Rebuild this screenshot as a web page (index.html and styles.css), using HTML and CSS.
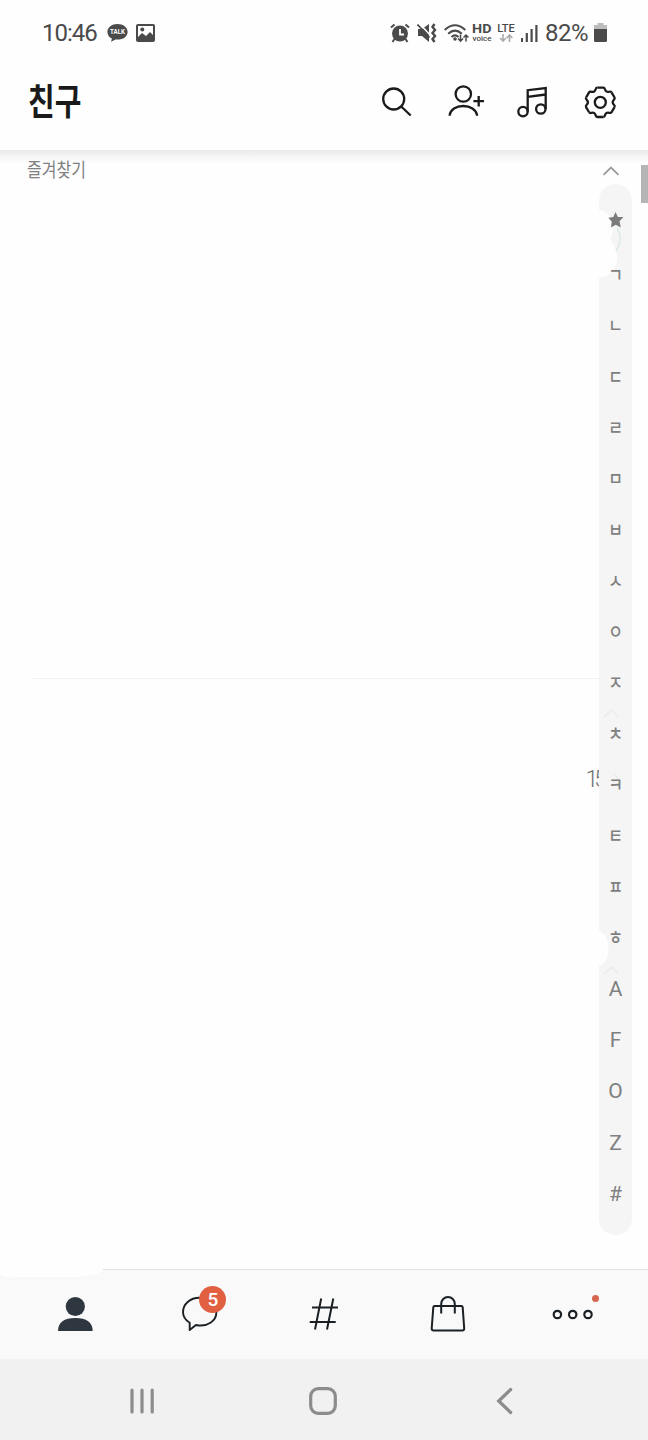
FILE: index.html
```html
<!DOCTYPE html>
<html lang="ko">
<head>
    <meta charset="utf-8">
    <title>친구</title>
    <link rel="stylesheet" href="styles.css">
</head>
<body>
    <div id="status-bar">
        <span class="clock">10:46</span>
        <svg class="talk" width="21" height="20" viewBox="0 0 21 20">
            <path d="M10.500 1C4.800 1 .4 4.300.4 8.900c0 2.900 1.800 5.300 4.500 6.700l-.8 3.200 4.400-2.300c7 .8 12.100-2.900 12.100-7.600C20.600 4.300 16.200 1 10.500 1z" fill="#4a4a4a"/>
            <text x="10.500" y="11.300" text-anchor="middle" textLength="15" lengthAdjust="spacingAndGlyphs">TALK</text>
        </svg>
        <svg width="19" height="18" viewBox="0 0 19 18">
            <path d="M2 0h15a2 2 0 0 1 2 2v14a2 2 0 0 1-2 2H2a2 2 0 0 1-2-2V2a2 2 0 0 1 2-2z" fill="#4a4a4a"/>
            <path d="M2 2h15v9l-3-3-4 4-4-3-4 4z" fill="#fff"/>
            <circle cx="6.300" cy="5.500" r="2" fill="#4a4a4a"/>
        </svg>
        <div class="status-right">
            <svg width="20" height="20" viewBox="0 0 20 20" fill="none" stroke="#4a4a4a">
                <circle cx="10" cy="10.500" r="8" fill="#4a4a4a" stroke="none"/>
                <path d="M1 4.500L4.500 1.500M19 4.500L15.500 1.500M4.500 16L2.500 19M15.500 16l2 3" stroke-width="2"/>
                <path d="M10 6v5.500h4" stroke="#fff" stroke-width="1.800"/>
            </svg>
            <svg class="mute" width="20" height="20" viewBox="0 0 20 20" fill="none" stroke="#4a4a4a">
                <path d="M1 6h4l7-5v18l-7-6H1z" fill="#4a4a4a" stroke="none"/>
                <path d="M2 0l12 13" stroke="#fff" stroke-width="1.500"/>
                <path d="M.5 1.500l12 13" stroke-width="1.800"/>
                <path d="M17.500 1l-2 3 2.500 3-2.500 3 2.500 3-2.500 3 2 3" stroke-width="2.400"/>
            </svg>
            <svg class="wifi" width="25" height="20" viewBox="0 0 25 20" fill="none" stroke="#4a4a4a" stroke-width="2">
                <path d="M.7 7Q11 -2.500 21.300 7M4.200 10.700Q11 4.500 17.800 10.700M7.500 14Q11 10.800 14.500 14"/>
                <circle cx="11" cy="16" r="1.800" fill="#4a4a4a" stroke="none"/>
                <path d="M16.500 11.500v6.500M14 15.500l2.500 2.700 2.500-2.700M22 18.500V12M19.500 14.500L22 12l2.500 2.500" stroke-width="1.500"/>
            </svg>
            <div class="hd"><b>HD</b><small>voice</small></div>
            <div class="lte">
                <b>LTE</b>
                <svg width="14" height="8" viewBox="0 0 14 8" fill="none" stroke="#aaa" stroke-width="1.600">
                    <path d="M4 0v7M1 4l3 3 3-3M10.500 8V1M7.700 4l2.800-3 2.800 3"/>
                </svg>
            </div>
            <svg class="signal" width="17" height="18" viewBox="0 0 17 18" fill="#4a4a4a">
                <path d="M0 14h2v4H0zM4.700 9h2.200v9H4.700zM9.500 5h2.200v13H9.500zM14.300 1h2.200v17h-2.200z"/>
            </svg>
            <span class="percent">82%</span>
            <svg class="battery" width="13" height="19" viewBox="0 0 13 19">
                <path d="M3.500 0h6v2H13v4H0V2h3.500z" fill="#bcbcbc"/>
                <path d="M0 6h13v11.500q0 1.500-1.500 1.500h-10Q0 19 0 17.500z" fill="#4a4a4a"/>
            </svg>
        </div>
    </div>

    <header>
        <h1>친구</h1>
        <div class="actions">
            <svg width="35" height="36" viewBox="0 0 35 36">
                <circle cx="13.700" cy="15" r="10.500"/>
                <path d="M21.200 22.500l9.500 9"/>
            </svg>
            <svg width="40" height="36" viewBox="0 0 40 36">
                <circle cx="17.300" cy="10" r="7.700"/>
                <path d="M3.700 31.700v-.8C4.500 25.500 10 22 17.200 22S30 25.500 31 30.900v.8M27.400 17.200h10.600M32.700 12v10.500"/>
            </svg>
            <svg width="32" height="36" viewBox="0 0 32 36">
                <circle cx="6" cy="27.600" r="4.700"/>
                <circle cx="23.800" cy="25" r="4.700"/>
                <path d="M10.700 27.500V6.200l18-2.200v21M10.700 12.800l18-2.300"/>
            </svg>
            <svg width="40" height="36" viewBox="0 0 40 36">
                <defs>
                    <path id="lobe" d="M-3 -14.700H3C5.200 -14.700 4 -11.900 6.200 -10.700C8.400 -9.500 10.130 -11.850 11.230 -9.950"/>
                </defs>
                <g transform="translate(20.300 18.300)">
                    <use href="#lobe"/>
                    <use href="#lobe" transform="rotate(60)"/>
                    <use href="#lobe" transform="rotate(120)"/>
                    <use href="#lobe" transform="rotate(180)"/>
                    <use href="#lobe" transform="rotate(240)"/>
                    <use href="#lobe" transform="rotate(300)"/>
                    <circle r="5.500"/>
                </g>
            </svg>
        </div>
    </header>

    <main>
        <div class="list">
            <h2>즐겨찾기</h2>
            <hr>
            <p class="count">15</p>
        </div>
        <div class="side">
            <svg class="fold" width="18" height="10" viewBox="0 0 18 10"><path d="M1.500 8.800L9 1.500l7.500 7.300"/></svg>
            <div class="index">
                <div class="star">
                    <svg width="16" height="16" viewBox="0 0 16 16"><path d="M7.500 0l2.400 4.900 5.600.2-4 4.100 1.300 6.200-5-2.600L3 15.600l.8-5.900L.4 5.800l5-.9z"/></svg>
                </div>
                <div>ㄱ</div>
                <div>ㄴ</div>
                <div>ㄷ</div>
                <div>ㄹ</div>
                <div>ㅁ</div>
                <div>ㅂ</div>
                <div>ㅅ</div>
                <div>ㅇ</div>
                <div>ㅈ</div>
                <div>ㅊ</div>
                <div>ㅋ</div>
                <div>ㅌ</div>
                <div>ㅍ</div>
                <div>ㅎ</div>
                <div class="latin">A</div>
                <div class="latin">F</div>
                <div class="latin">O</div>
                <div class="latin">Z</div>
                <div class="latin">#</div>
                <!-- what shows through behind the letters -->
                <svg class="under" width="33" height="1051" viewBox="0 0 33 1051" fill="none">
                    <path d="M0 26C8 26 14 34 14 43q0 7-3 13C15 60 18 67 18 74 18 85 10 93 0 94z" fill="#fefefe"/>
                    <path d="M0 747C6 749 9.500 757 9.500 765S6 780 0 782z" fill="#fefefe"/>
                    <path d="M18 44q7 11-1 23" stroke="#dcebe4" stroke-width="1.500"/>
                    <path d="M5 533l7.500-7 7.500 7M5 790l7.500-7 7.500 7M14 589l5 5-5 5" stroke="#ebebeb" stroke-width="1.500"/>
                </svg>
            </div>
            <div class="scrollbar"></div>
        </div>
    </main>

    <nav id="tabs">
        <div class="tab">
            <svg width="40" height="40" viewBox="0 0 40 40" fill="#2e3640">
                <circle cx="20.300" cy="12.500" r="9.600"/>
                <path d="M3 37C3.200 28 9 24 20.300 24S37.500 28 37.700 37z"/>
            </svg>
        </div>
        <div class="tab">
            <svg width="40" height="40" viewBox="0 0 40 40" fill="none" stroke="#1b2025" stroke-width="1.900" stroke-linejoin="round">
                <path d="M19.500 3.800C10 3.800 3 10.200 3 18c0 4.700 2.200 8 6.700 10.700V36l6.200-5c11.600 2.500 20.500-4 20.500-13 0-8-7.300-14.200-16.900-14.200z"/>
            </svg>
            <span class="badge">5</span>
        </div>
        <div class="tab">
            <svg width="40" height="40" viewBox="0 0 40 40" fill="none" stroke="#1b2025" stroke-width="2">
                <path d="M17.200 4.500L11 35.500M29.300 4.500L23 35.500M8 13.500h26M5.700 28h26"/>
            </svg>
        </div>
        <div class="tab">
            <svg width="40" height="40" viewBox="0 0 40 40" fill="none" stroke="#1b2025" stroke-width="2">
                <path d="M6.700 12h26.600q1.300 0 1.400 1.300l1.500 21.200q0 2-2 2H5.700q-2 0-2-2l1.600-21.200Q5.400 12 6.700 12z"/>
                <path d="M13.200 19.500V10a6.800 7 0 0 1 13.600 0v9.500"/>
            </svg>
        </div>
        <div class="tab">
            <svg width="46" height="40" viewBox="0 0 46 40" fill="none" stroke="#1b2025" stroke-width="2.200">
                <circle cx="7.400" cy="20.500" r="3.700"/>
                <circle cx="22.700" cy="20.500" r="3.700"/>
                <circle cx="38" cy="20.500" r="3.700"/>
            </svg>
            <span class="dot"></span>
        </div>
    </nav>

    <footer>
        <svg width="26" height="28" viewBox="0 0 26 28"><path d="M3 3v22M13 3v22M23.200 3v22"/></svg>
        <svg width="28" height="28" viewBox="0 0 28 28"><rect x="1.700" y="1.700" width="24.600" height="24.600" rx="7.500"/></svg>
        <svg width="28" height="28" viewBox="0 0 28 28"><path d="M19.700 2.500L7.700 14l12 11.500"/></svg>
    </footer>
</body>
</html>
```

FILE: styles.css
```css
* {
    box-sizing: border-box;
}

body {
    width: 648px;
    height: 1440px;
    margin: 0;
    background: #fefefe;
    color: #4a4a4a;
    font-family: Roboto, "Noto Sans CJK KR", sans-serif;
    display: flex;
    flex-direction: column;
    overflow: hidden;
}

svg {
    display: block;
    flex: none;
}

/* status bar */
#status-bar {
    height: 65px;
    padding: 0 41px 0 42px;
    display: flex;
    align-items: center;
}

.clock {
    width: 65px;
    font-size: 24px;
    letter-spacing: -1px;
    line-height: 28px;
}

.talk {
    margin-right: 8px;
}

.talk text {
    font-size: 6.5px;
    font-weight: bold;
    fill: #fff;
}

.status-right {
    margin-left: auto;
    display: flex;
    align-items: center;
}

.mute {
    margin-left: 7px;
}

.wifi {
    margin-left: 7px;
}

.hd,
.lte {
    width: 20px;
    margin-left: 3px;
    height: 18px;
    display: flex;
    flex-direction: column;
    align-items: center;
}

.hd {
    height: 20px;
}

.hd b {
    font-size: 13px;
    line-height: 12px;
    transform: scaleX(1.1);
}

.hd small {
    font-size: 8px;
    line-height: 8px;
    font-weight: 500;
}

.lte {
    margin-left: 4px;
}

.lte b {
    font-size: 11px;
    line-height: 10px;
    font-weight: 500;
}

.signal {
    margin-left: 5px;
}

.percent {
    margin-left: 7px;
    width: 44px;
    font-size: 24px;
    letter-spacing: -0.5px;
    line-height: 28px;
    padding-top: 1px;
}

.battery {
    margin-left: 5px;
}

/* header */
header {
    height: 85px;
    padding: 0 28px 11px;
    display: flex;
    align-items: center;
    justify-content: space-between;
}

h1 {
    margin: 0;
    font-size: 29px;
    line-height: 36px;
    color: #1a1a1a;
    transform: scaleY(1.25);
}

.actions {
    display: flex;
    gap: 31px;
}

.actions svg {
    fill: none;
    stroke: #1b1b1b;
    stroke-width: 2.3;
}

/* friend list */
main {
    height: 1119px;
    display: flex;
    background: linear-gradient(#e9e9e9, #f5f5f5 6px, #fefefe 14px);
}

.list {
    width: 599px;
}

h2 {
    margin: 9px 0 0 27px;
    font-size: 16px;
    font-weight: 400;
    line-height: 24px;
    color: #808080;
    transform: scaleY(1.2);
}

hr {
    margin: 495px 0 0 33px;
    border: none;
    border-top: 1px solid #f1f1f1;
}

.count {
    margin: 87px -4px 0 0;
    text-align: right;
    font-size: 23px;
    font-weight: 300;
    letter-spacing: -4px;
    line-height: 28px;
    color: #707070;
}

.side {
    width: 49px;
    position: relative;
}

.fold {
    margin: 16px 0 8px 3px;
}

.fold path {
    fill: none;
    stroke: #9a9a9a;
    stroke-width: 1.8;
}

.index {
    width: 33px;
    height: 1051px;
    padding-top: 10px;
    border-radius: 16.5px;
    background: #f5f5f5;
    position: relative;
}

.index div {
    height: 51px;
    line-height: 51px;
    text-align: center;
    font-size: 16px;
    font-weight: 500;
    color: #808080;
    position: relative;
    z-index: 1;
    transform: scaleY(1.2);
}

.index .star {
    height: 56px;
    padding: 18px 0 0 9px;
    transform: none;
}

.star svg {
    fill: #7b7b7b;
}

.index .latin {
    height: 51.2px;
    font-size: 21px;
    font-weight: 400;
    transform: none;
}

.under {
    position: absolute;
    top: 0;
    left: 0;
}

.scrollbar {
    position: absolute;
    top: 15px;
    right: 0;
    width: 7px;
    height: 38px;
    background: #b5b5b5;
}

/* bottom tabs */
#tabs {
    height: 90px;
    padding: 0 13px 1px;
    border-top: 1px solid #e2e2e2;
    background: #f9f9f9;
    display: flex;
    position: relative;
}

#tabs::before {
    content: "";
    position: absolute;
    left: -4px;
    top: -1px;
    width: 107px;
    height: 8px;
    background: #fefefe;
    border-radius: 0 0 30px 15px / 0 0 8px 8px;
}

.tab {
    flex: 1;
    display: flex;
    align-items: center;
    justify-content: center;
    position: relative;
}

.badge {
    position: absolute;
    top: 16px;
    left: 62px;
    width: 27px;
    height: 27px;
    border-radius: 50%;
    background: #e16042;
    color: #fff;
    font-size: 19px;
    font-weight: 500;
    line-height: 28px;
    text-align: center;
}

.dot {
    position: absolute;
    top: 25px;
    right: 36px;
    width: 7px;
    height: 7px;
    border-radius: 50%;
    background: #d5664d;
}

/* android navigation */
footer {
    height: 81px;
    padding: 3px 52px 0 51px;
    background: #f1f1f1;
    display: grid;
    grid-template-columns: repeat(3, 1fr);
    align-items: center;
    justify-items: center;
}

footer svg {
    fill: none;
    stroke: #8c8c8c;
    stroke-width: 3.2;
    stroke-linecap: round;
}
```
